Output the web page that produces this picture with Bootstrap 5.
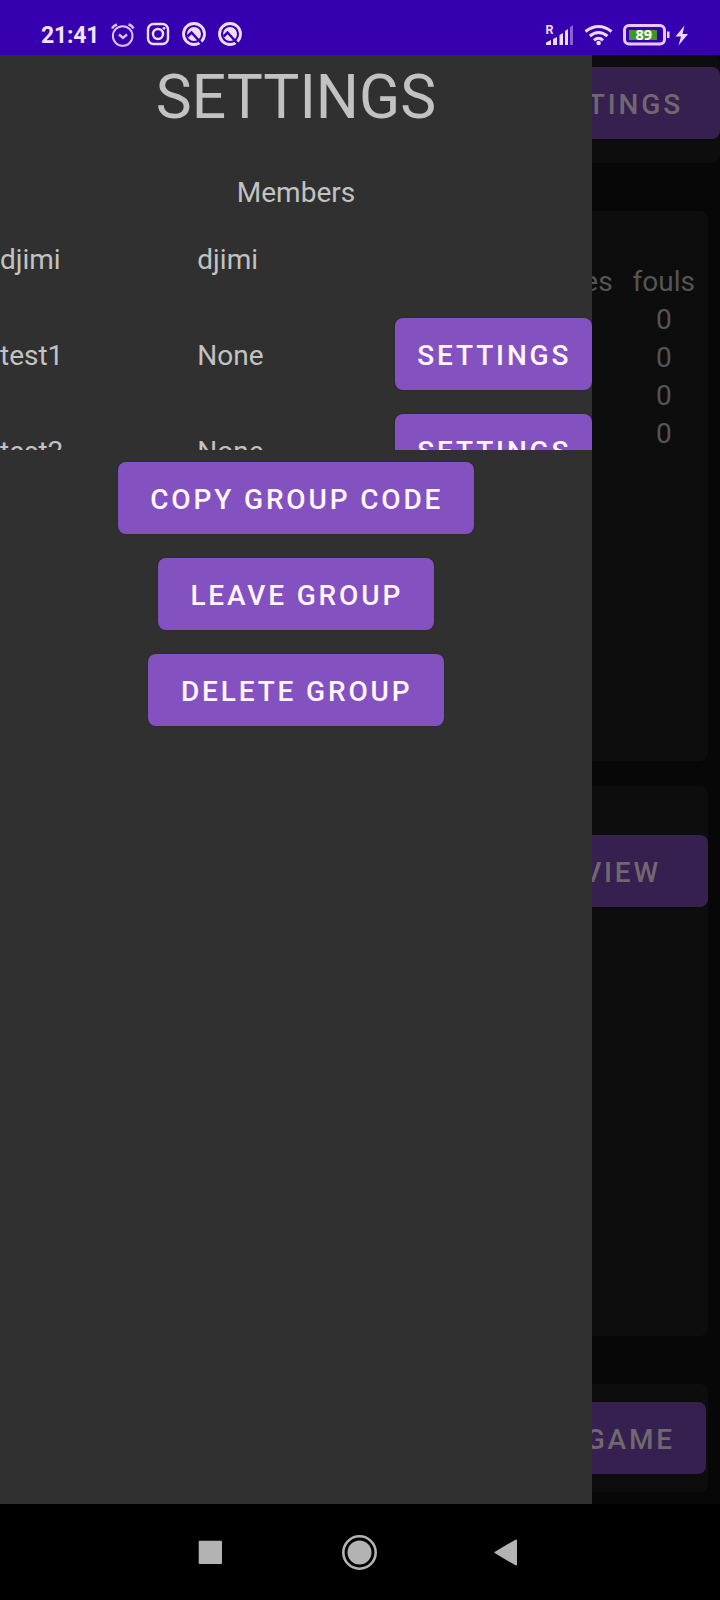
<!DOCTYPE html>
<html lang="en">
<head>
<meta charset="utf-8">
<meta name="viewport" content="width=device-width, initial-scale=1">
<title>Group settings</title>
<link rel="stylesheet" href="https://cdn.jsdelivr.net/npm/bootstrap@5.3.0/dist/css/bootstrap.min.css">
<style>
  body { font-family: Roboto, "Noto Sans", sans-serif; font-size: 28px; line-height: 38px; background: #070707; color: #c2c2c2; }
  .phone { width: 720px; height: 1600px; }
  .statusbar { height: 55px; background: #3600b1; color: #f3e2fb; padding-left: 41px; padding-right: 28px; }
  .statusbar svg { height: 55px; display: block; flex: none; }
  .clock { width: 64px; font-size: 23px; font-weight: 700; line-height: 28px; padding-top: 22px; white-space: nowrap; letter-spacing: -.2px; }
  .stage { height: 1449px; background: #070707; }
  .drawer { width: 592px; background: #303030; }
  .drawer h1 { font-size: 60.5px; font-weight: 400; line-height: 86px; height: 119px; }
  .members-title { height: 36px; }
  .members { height: 240px; }
  .member { height: 96px; }
  .member span { display: block; padding-top: 4px; }
  .act { --bs-btn-color: #fff5ff; --bs-btn-bg: #8452c0; --bs-btn-hover-bg: #8452c0; --bs-btn-hover-color: #fff5ff;
    height: 72px; border: 0; border-radius: 8px; font-size: 28px; font-weight: 500; letter-spacing: 2.85px; line-height: 38px;
    padding: 4px 31px 0 32.500px; white-space: nowrap; box-shadow: 0 0 2px rgba(0,0,0,.3); }
  .act-tight { padding-left: 2px; padding-right: 0; }
  .dim .act { --bs-btn-color: #71686f; --bs-btn-bg: #35204f; box-shadow: none; }
  .dim { color: #555; }
  .panel { background: #0d0d0d; border-radius: 8px; }
  .panel-top { height: 108px; padding-top: 12px; }
  .panel-top .act { padding-right: 37px; }
  .panel-stats { height: 550px; margin: 48px 12px 25px; padding: 52px 13px 0; }
  .panel-view { height: 550px; margin: 0 12px 48px; padding-top: 49px; }
  .panel-view .act { padding-right: 47px; }
  .panel-game { height: 108px; margin: 0 12px; padding: 18px 2px 0; }
  .stats { gap: 0 20px; grid-template-columns: auto auto; justify-content: end; }
  .navkeys { height: 96px; }
</style>
</head>
<body>
<div class="phone d-flex flex-column overflow-hidden">
  <header class="statusbar d-flex">
    <div class="clock">21:41</div>
    <svg width="140" viewBox="105 0 140 55" fill="none" stroke="#f0dcff" stroke-width="2">
      <g stroke="#dfbdf6"><circle cx="122.700" cy="36" r="9.800"/><path d="M119 34.500l4 3.500 4-3.500M112 28.500c1-2 3-3.500 5-4M128.500 24.500c2.500.5 4 2 5 4" stroke-width="2.400"/></g>
      <rect x="148" y="24" width="20" height="20" rx="5.500" stroke-width="2.400"/><circle cx="158" cy="34" r="5" stroke-width="2.400"/><circle cx="164" cy="28.300" r="1.400" fill="#f0dcff" stroke="none"/>
      <g id="logo">
        <circle cx="194" cy="34" r="10.500" stroke-width="2.800"/>
        <circle cx="194" cy="34" r="7" fill="#f0dcff" stroke="none"/>
        <path d="M187.500 36.500L191.500 32.500 202.500 44.500" stroke="#3600b1" stroke-width="2.500"/>
      </g>
      <use href="#logo" x="36"/>
    </svg>
    <svg class="ms-auto" width="148" viewBox="544 0 148 55" fill="#eed8fc">
      <text x="545.500" y="34" font-size="12.500" font-weight="700">R</text>
      <path d="M546 45v-2.500l5-2.500v5zM553 39l4-2v8h-4zM559.500 35l3.500-2v12h-3.500zM565 31l3-2v16h-3z"/>
      <path d="M570 27l3-2v20h-3z" opacity=".45"/>
      <g fill="none" stroke="#eed8fc" stroke-width="3"><path d="M585.500 31.500q13-10 26 0M589.800 36q8.700-7 17.600 0M594 40.300q4.500-4 9 0"/></g>
      <circle cx="598.600" cy="43" r="2.300"/>
      <rect x="624.500" y="25.500" width="40" height="18.500" rx="4.500" fill="none" stroke="#e6c8fa" stroke-width="3"/>
      <path d="M667 31.500h2.500v6.500H667z"/>
      <path fill="#3f9920" d="M629 30h28v10h-28z"/>
      <text x="643.700" y="40" text-anchor="middle" font-size="14.500" font-weight="700" fill="#fff" font-family="Noto Sans">89</text>
      <path d="M684.500 25.500L675.500 36.500h5.500l-2.500 9L688 34h-5.500z"/>
    </svg>
  </header>

  <main class="stage position-relative">
    <div class="dim">
      <section class="panel panel-top d-flex justify-content-end align-items-start"><button class="btn act">SETTINGS</button></section>
      <section class="panel panel-stats">
        <div class="stats d-grid text-center">
          <span>matches</span><span>fouls</span>
          <span></span><span>0</span>
          <span></span><span>0</span>
          <span></span><span>0</span>
          <span></span><span>0</span>
        </div>
      </section>
      <section class="panel panel-view d-flex justify-content-end align-items-start"><button class="btn act">VIEW</button></section>
      <section class="panel panel-game d-flex justify-content-end align-items-start"><button class="btn act">GAME</button></section>
    </div>

    <aside class="drawer position-absolute top-0 start-0 h-100">
      <h1 class="text-center m-0">SETTINGS</h1>
      <div class="members-title text-center">Members</div>
      <div class="members overflow-hidden">
        <div class="member row g-0 align-items-center"><div class="col-4"><span>djimi</span></div><div class="col-4"><span>djimi</span></div></div>
        <div class="member row g-0 align-items-center"><div class="col-4"><span>test1</span></div><div class="col-4"><span>None</span></div><div class="col-4"><button class="btn act act-tight w-100 d-block">SETTINGS</button></div></div>
        <div class="member row g-0 align-items-center"><div class="col-4"><span>test2</span></div><div class="col-4"><span>None</span></div><div class="col-4"><button class="btn act act-tight w-100 d-block">SETTINGS</button></div></div>
      </div>
      <div class="d-flex flex-column align-items-center gap-4 pt-2 mt-1">
        <button class="btn act">COPY GROUP CODE</button>
        <button class="btn act">LEAVE GROUP</button>
        <button class="btn act">DELETE GROUP</button>
      </div>
    </aside>
  </main>

  <nav class="navkeys bg-black">
    <svg class="d-block" width="720" height="96" viewBox="0 0 720 96" fill="#b3b3b3">
      <rect x="198.700" y="36.700" width="23.300" height="23.300" rx="1"/>
      <circle cx="359.500" cy="48.500" r="12"/><circle cx="359.500" cy="48.500" r="16.200" fill="none" stroke="#b3b3b3" stroke-width="2.600"/>
      <path d="M495.500 48.500L516 36.500v24z" stroke="#b3b3b3" stroke-width="2" stroke-linejoin="round"/>
    </svg>
  </nav>
</div>
<script src="https://cdn.jsdelivr.net/npm/bootstrap@5.3.0/dist/js/bootstrap.bundle.min.js"></script>
</body>
</html>
